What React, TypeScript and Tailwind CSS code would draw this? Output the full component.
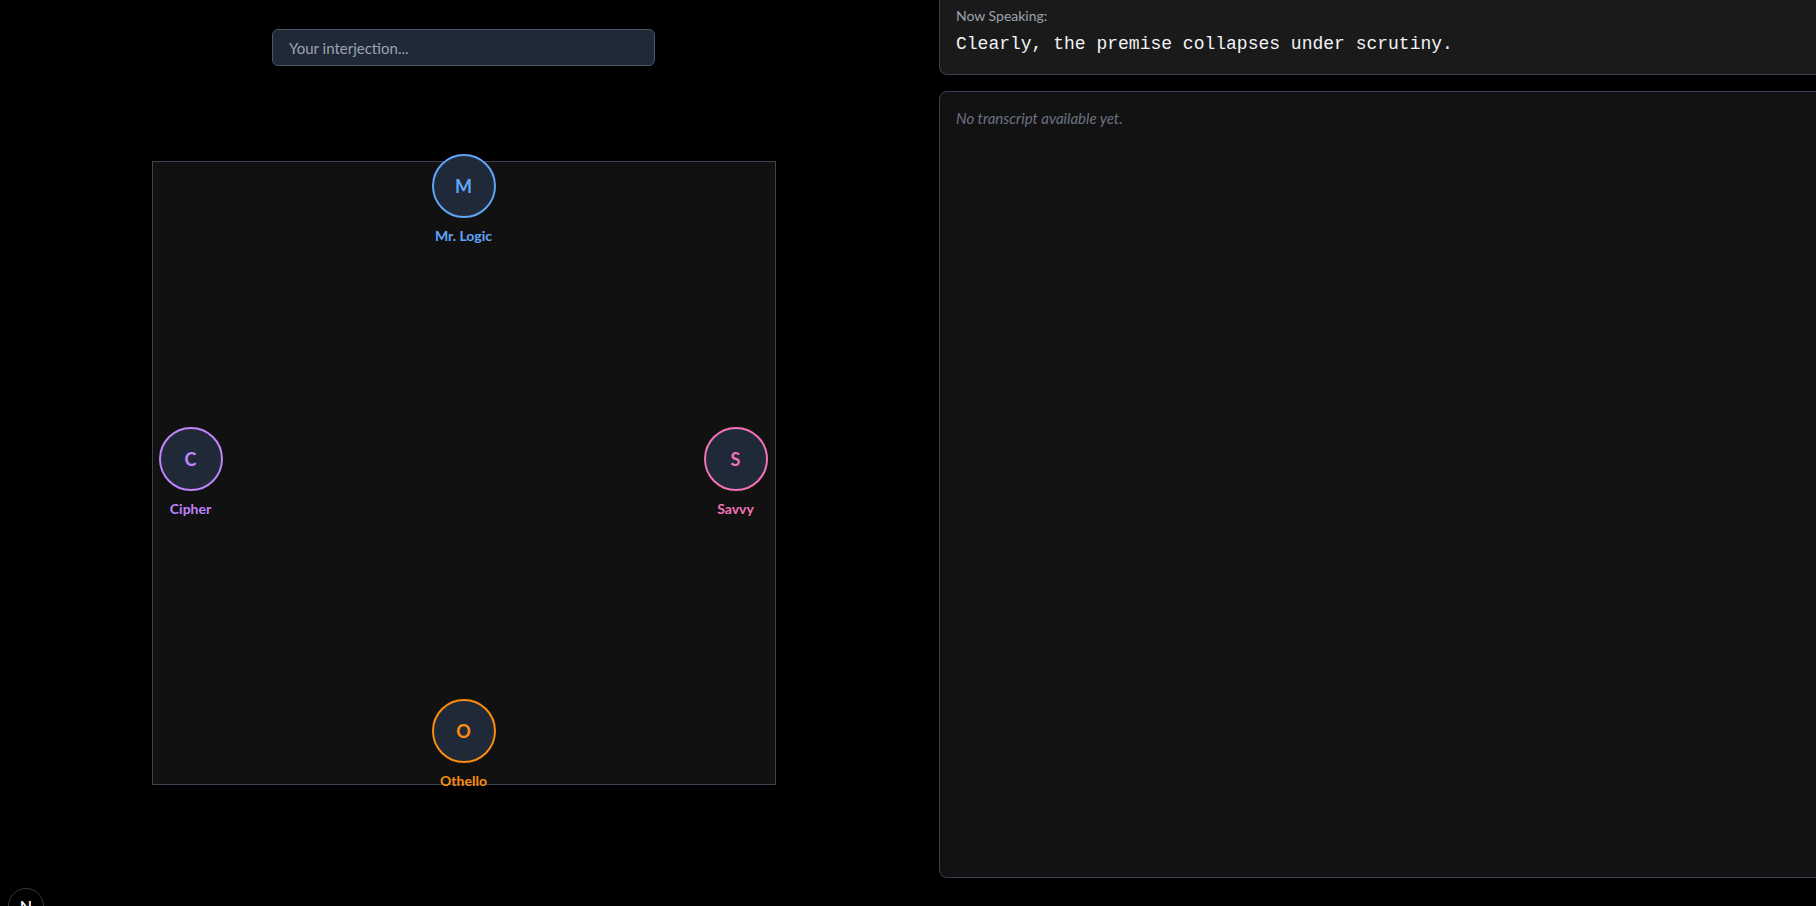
import React from 'react';

type Speaker = {
  name: string;
  initial: string;
  color: string;
  border: string;
  pos: string;
};

const speakers: Speaker[] = [
  { name: 'Mr. Logic', initial: 'M', color: 'text-[#60a5fa]', border: 'border-[#60a5fa]', pos: 'left-[311px] top-[38px]' },
  { name: 'Savvy', initial: 'S', color: 'text-[#f472b6]', border: 'border-[#f472b6]', pos: 'left-[583px] top-[311px]' },
  { name: 'Othello', initial: 'O', color: 'text-[#fb8c0f]', border: 'border-[#fb8c0f]', pos: 'left-[311px] top-[583px]' },
  { name: 'Cipher', initial: 'C', color: 'text-[#c084fc]', border: 'border-[#c084fc]', pos: 'left-[38px] top-[311px]' },
];

const SpeakerNode = ({ s }: { s: Speaker }) => (
  <div className={`absolute ${s.pos} -translate-x-1/2 -translate-y-1/2 flex flex-col items-center`}>
    <div
      className={`w-16 h-16 rounded-full border-2 ${s.border} bg-[#1f2937] flex items-center justify-center`}
    >
      <span className={`text-lg font-bold ${s.color}`}>{s.initial}</span>
    </div>
    <span className={`mt-2 text-sm font-bold leading-5 ${s.color}`}>{s.name}</span>
  </div>
);

const App = () => {
  return (
    <div
      className="flex h-screen w-screen overflow-hidden bg-black text-white"
      style={{ fontFamily: 'Lato, "Noto Sans", sans-serif' }}
    >
      {/* debate stage */}
      <div className="w-[927px] shrink-0 flex flex-col items-center pt-[29px]">
        <input
          type="text"
          placeholder="Your interjection..."
          className="w-[383px] h-[37px] rounded-md border border-[#4b5563] bg-[#1f2937] px-4 text-[15px] text-white placeholder:text-[#9ca3af] outline-none"
        />
        <div className="relative mt-[95px] w-[624px] h-[624px] border border-[#3b4252] bg-[#111111]">
          {speakers.map((s) => (
            <SpeakerNode key={s.name} s={s} />
          ))}
        </div>
      </div>

      {/* transcript side */}
      <div className="ml-[12px] w-[900px] shrink-0 -mt-[11px] flex flex-col gap-4">
        <div className="rounded-lg border border-[#374151] bg-[#1a1a1a] p-4">
          <div className="text-sm leading-5 text-[#9ca3af]">Now Speaking:</div>
          <div
            className="mt-1 text-lg leading-7 text-[#f3f4f6]"
            style={{ fontFamily: '"Liberation Mono", monospace' }}
          >
            Clearly, the premise collapses under scrutiny.
          </div>
        </div>
        <div className="h-[787px] rounded-lg border border-[#374151] bg-[#121212] p-4">
          <p className="text-[15px] leading-5 italic text-[#6b7280]">No transcript available yet.</p>
        </div>
      </div>

      {/* dev indicator */}
      <div className="fixed left-[8px] top-[888px] w-9 h-9 rounded-full border border-[#3a3a3a] bg-black flex items-center justify-center">
        <span className="text-base font-semibold text-white">N</span>
      </div>
    </div>
  );
};

export default App;
